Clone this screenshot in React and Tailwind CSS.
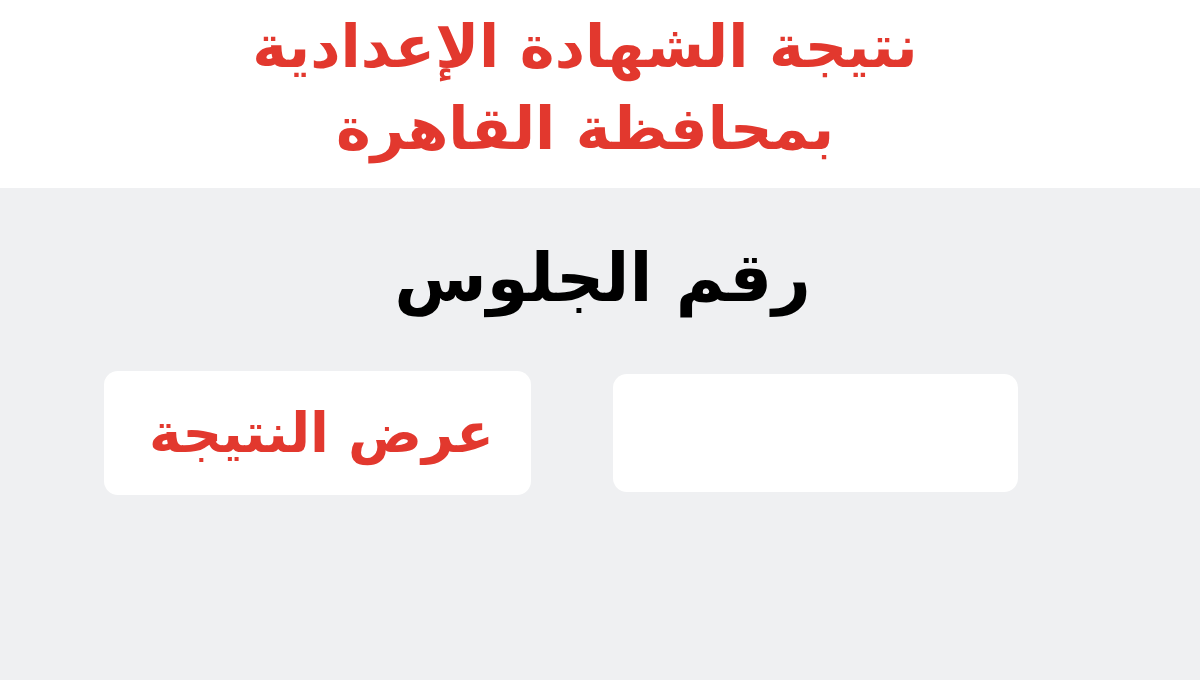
const arabic = { fontFamily: '"DejaVu Sans", "Noto Sans", sans-serif' };

export default function App() {
  return (
    <div className="w-[1200px] h-[680px] bg-[#eff0f2] flex flex-col overflow-hidden" style={arabic}>
      {/* header */}
      <div className="h-[188px] bg-white flex flex-col items-center justify-center pb-3 pr-[30px]" dir="rtl">
        <h1 className="text-[#e2382e] text-[59px] font-bold leading-[82px] text-center">
          نتيجة الشهادة الإعدادية
          <br />
          بمحافظة القاهرة
        </h1>
      </div>

      {/* label */}
      <div className="flex justify-center pt-[40px]" dir="rtl">
        <h2 className="text-black text-[67px] font-bold leading-[100px] ml-[5px]">رقم الجلوس</h2>
      </div>

      {/* form row */}
      <div className="flex items-start pl-[104px] pt-[43px] gap-[82px]">
        <button
          className="w-[427px] h-[124px] bg-white rounded-[14px] text-[#e2382e] text-[55px] font-bold flex items-center justify-center pl-2"
          dir="rtl"
        >
          عرض النتيجة
        </button>
        <input
          type="text"
          dir="rtl"
          className="mt-[3px] w-[405px] h-[118px] bg-white rounded-[14px] outline-none px-6 text-[40px]"
        />
      </div>
    </div>
  );
}
